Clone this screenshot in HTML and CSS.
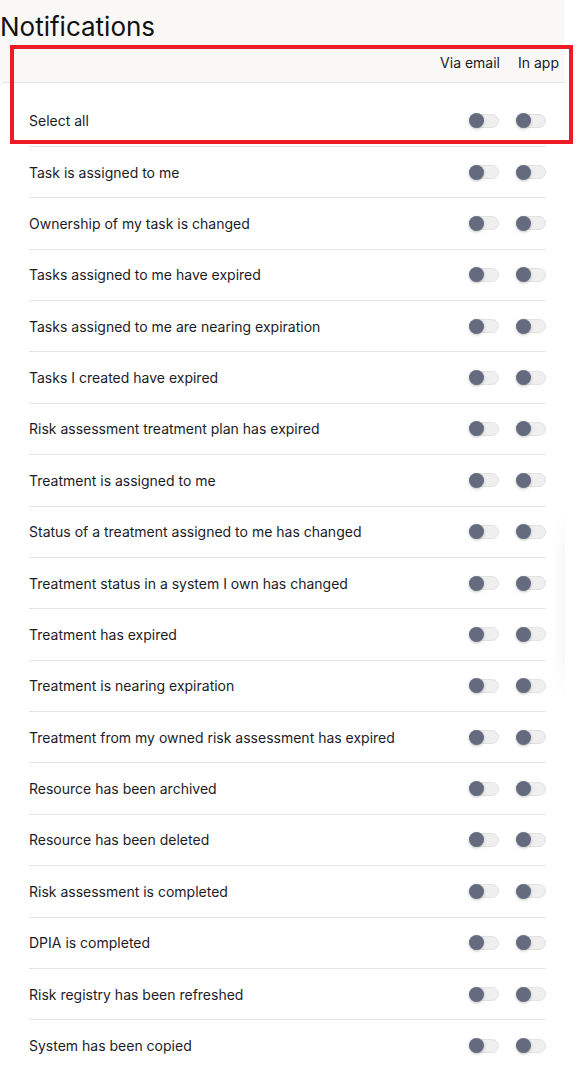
FILE: index.html
```html
<!DOCTYPE html>
<html>
<head>
<meta charset="utf-8">
<link rel="stylesheet" href="styles.css">
</head>
<body>
<div class="page">
  <div class="top">
    <h1 class="title">Notifications</h1>
    <div class="head-row">
      <span class="head-label">Via email</span>
      <span class="head-label">In app</span>
    </div>
  </div>
  <div class="card">
    <div class="row"><span class="label">Select all</span><span class="toggles"><span class="toggle"></span><span class="toggle"></span></span></div>
    <div class="row"><span class="label">Task is assigned to me</span><span class="toggles"><span class="toggle"></span><span class="toggle"></span></span></div>
    <div class="row"><span class="label">Ownership of my task is changed</span><span class="toggles"><span class="toggle"></span><span class="toggle"></span></span></div>
    <div class="row"><span class="label">Tasks assigned to me have expired</span><span class="toggles"><span class="toggle"></span><span class="toggle"></span></span></div>
    <div class="row"><span class="label">Tasks assigned to me are nearing expiration</span><span class="toggles"><span class="toggle"></span><span class="toggle"></span></span></div>
    <div class="row"><span class="label">Tasks I created have expired</span><span class="toggles"><span class="toggle"></span><span class="toggle"></span></span></div>
    <div class="row"><span class="label">Risk assessment treatment plan has expired</span><span class="toggles"><span class="toggle"></span><span class="toggle"></span></span></div>
    <div class="row"><span class="label">Treatment is assigned to me</span><span class="toggles"><span class="toggle"></span><span class="toggle"></span></span></div>
    <div class="row"><span class="label">Status of a treatment assigned to me has changed</span><span class="toggles"><span class="toggle"></span><span class="toggle"></span></span></div>
    <div class="row"><span class="label">Treatment status in a system I own has changed</span><span class="toggles"><span class="toggle"></span><span class="toggle"></span></span></div>
    <div class="row"><span class="label">Treatment has expired</span><span class="toggles"><span class="toggle"></span><span class="toggle"></span></span></div>
    <div class="row"><span class="label">Treatment is nearing expiration</span><span class="toggles"><span class="toggle"></span><span class="toggle"></span></span></div>
    <div class="row"><span class="label">Treatment from my owned risk assessment has expired</span><span class="toggles"><span class="toggle"></span><span class="toggle"></span></span></div>
    <div class="row"><span class="label">Resource has been archived</span><span class="toggles"><span class="toggle"></span><span class="toggle"></span></span></div>
    <div class="row"><span class="label">Resource has been deleted</span><span class="toggles"><span class="toggle"></span><span class="toggle"></span></span></div>
    <div class="row"><span class="label">Risk assessment is completed</span><span class="toggles"><span class="toggle"></span><span class="toggle"></span></span></div>
    <div class="row"><span class="label">DPIA is completed</span><span class="toggles"><span class="toggle"></span><span class="toggle"></span></span></div>
    <div class="row"><span class="label">Risk registry has been refreshed</span><span class="toggles"><span class="toggle"></span><span class="toggle"></span></span></div>
    <div class="row"><span class="label">System has been copied</span><span class="toggles"><span class="toggle"></span><span class="toggle"></span></span></div>
  </div>
  <div class="side-shadow"></div>
</div>
<div class="highlight"></div>
</body>
</html>
```

FILE: styles.css
```css
* { box-sizing: border-box; }
html, body { margin: 0; padding: 0; background: #ffffff; }
body {
  font-family: "Inter", "Noto Sans", sans-serif;
  color: #1c1c28;
  overflow: hidden;
  height: 1069px;
}
.page {
  width: 565px;
  position: relative;
}
.top {
  background: #f9f8f6;
  padding-top: 11px;
}
.title {
  margin: 0;
  font-size: 26px;
  line-height: 32px;
  font-weight: 400;
  letter-spacing: 0;
  color: #111111;
}
.head-row {
  height: 39px;
  display: flex;
  justify-content: flex-end;
  align-items: center;
  gap: 18px;
  padding-right: 6px;
  padding-bottom: 1px;
}
.head-label {
  font-size: 14px;
}
.card {
  background: #ffffff;
  border-top: 1px solid #e4e4e7;
  border-radius: 5px 0 0 0;
  padding-top: 12.5px;
  padding-left: 29px;
  padding-right: 19px;
  position: relative;
  z-index: 1;
}
.row {
  height: 51.375px;
  display: flex;
  align-items: center;
  justify-content: space-between;
  border-bottom: 1px solid #e7e7e7;
  font-size: 14px;
}
.row:last-child { border-bottom: none; }
.toggles {
  display: flex;
  gap: 17px;
}
.toggle {
  width: 30px;
  height: 14px;
  border-radius: 7px;
  background: #efefef;
  border: 1px solid #e2e2e2;
  position: relative;
}
.toggle::before {
  content: "";
  position: absolute;
  left: -1px;
  top: -1.5px;
  width: 15px;
  height: 15px;
  border-radius: 50%;
  background: #646b7f;
  box-shadow: 0 1px 3px rgba(0,0,0,0.25);
}
.side-shadow {
  position: absolute;
  right: 0;
  top: 510px;
  width: 14px;
  height: 190px;
  background: linear-gradient(to right, rgba(0,0,0,0), rgba(0,0,0,0.03));
  -webkit-mask-image: linear-gradient(to bottom, transparent, #000 25%, #000 75%, transparent);
  mask-image: linear-gradient(to bottom, transparent, #000 25%, #000 75%, transparent);
  z-index: 2;
}
.highlight {
  position: absolute;
  left: 10px;
  top: 45px;
  width: 563px;
  height: 99px;
  border: 4px solid #ed1c24;
  z-index: 5;
}
```
